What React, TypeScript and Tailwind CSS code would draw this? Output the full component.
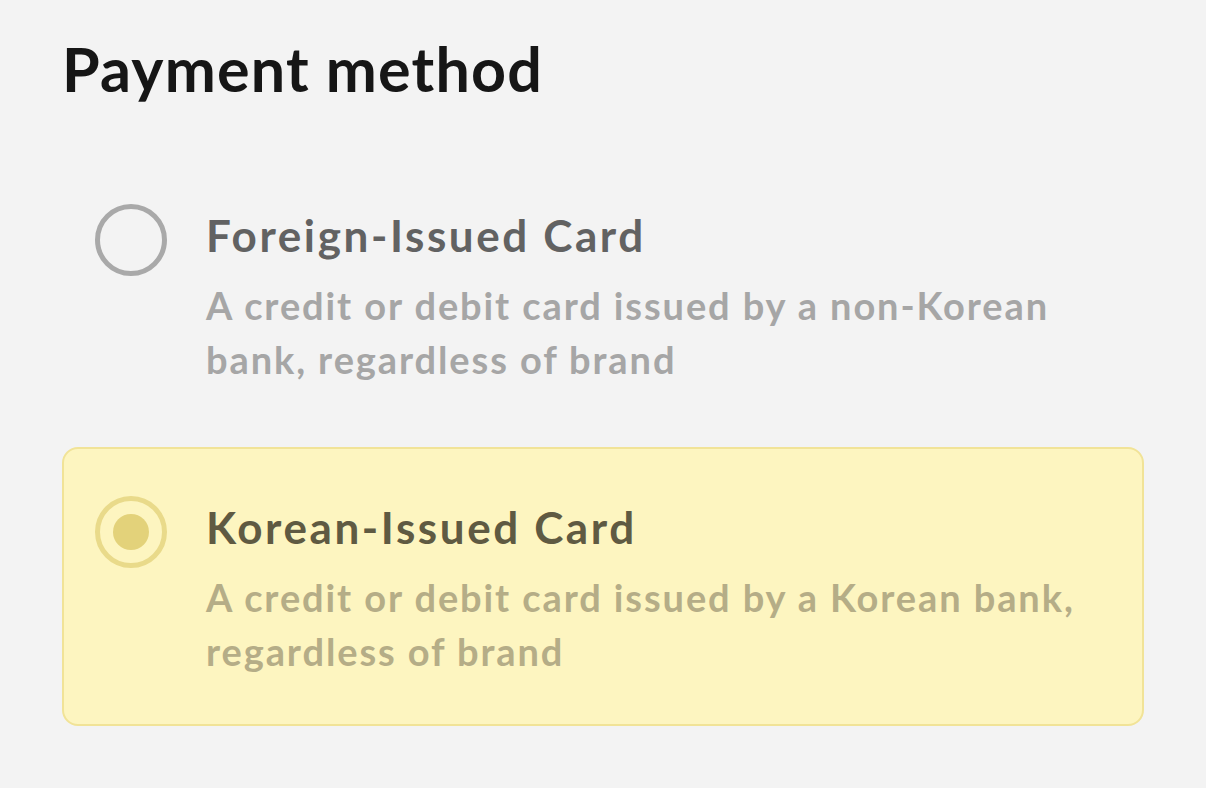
import { useState } from "react";

type Option = { id: string; title: string; desc: string };

const OPTIONS: Option[] = [
  { id: "foreign", title: "Foreign-Issued Card", desc: "A credit or debit card issued by a non-Korean bank, regardless of brand" },
  { id: "korean", title: "Korean-Issued Card", desc: "A credit or debit card issued by a Korean bank, regardless of brand" },
];

function Radio({ on }: { on: boolean }) {
  return on ? (
    <span className="flex h-[72px] w-[72px] items-center justify-center rounded-full border-[5px] border-[#e9da8a]">
      <span className="h-[36px] w-[36px] rounded-full bg-[#e3d27a]" />
    </span>
  ) : (
    <span className="h-[72px] w-[72px] rounded-full border-[5px] border-[#a9a9a9]" />
  );
}

export default function App() {
  const [sel, setSel] = useState("korean");
  return (
    <div className="min-h-screen bg-[#f3f3f3] px-[62px] pt-[33px] font-['Lato',sans-serif]">
      <h1 className="text-[61px] font-bold leading-[72px] tracking-[1.2px] text-[#161616]">Payment method</h1>
      <div className="mt-[50px] flex w-[1082px] flex-col gap-[13px]">
        {OPTIONS.map((o) => {
          const on = sel === o.id;
          return (
            <button key={o.id} type="button" onClick={() => setSel(o.id)}
              className={`flex h-[279px] items-start gap-[39px] rounded-[16px] border-2 pl-[31px] pt-[38px] text-left ${on ? "border-[#f1e397] bg-[#fdf5c0]" : "border-transparent"}`}>
              <span className="flex h-[90px] items-center">
                <Radio on={on} />
              </span>
              <span className="flex w-[900px] flex-col">
                <span className={`mt-[-5px] text-[44px] font-bold leading-[90px] tracking-[2.6px] ${on ? "text-[#5f5a42]" : "text-[#626262]"}`}>{o.title}</span>
                <span className={`mt-[-2px] text-[38px] font-bold leading-[54px] tracking-[1.9px] ${on ? "text-[#b5ad87]" : "text-[#a6a6a6]"}`}>{o.desc}</span>
              </span>
            </button>
          );
        })}
      </div>
    </div>
  );
}
